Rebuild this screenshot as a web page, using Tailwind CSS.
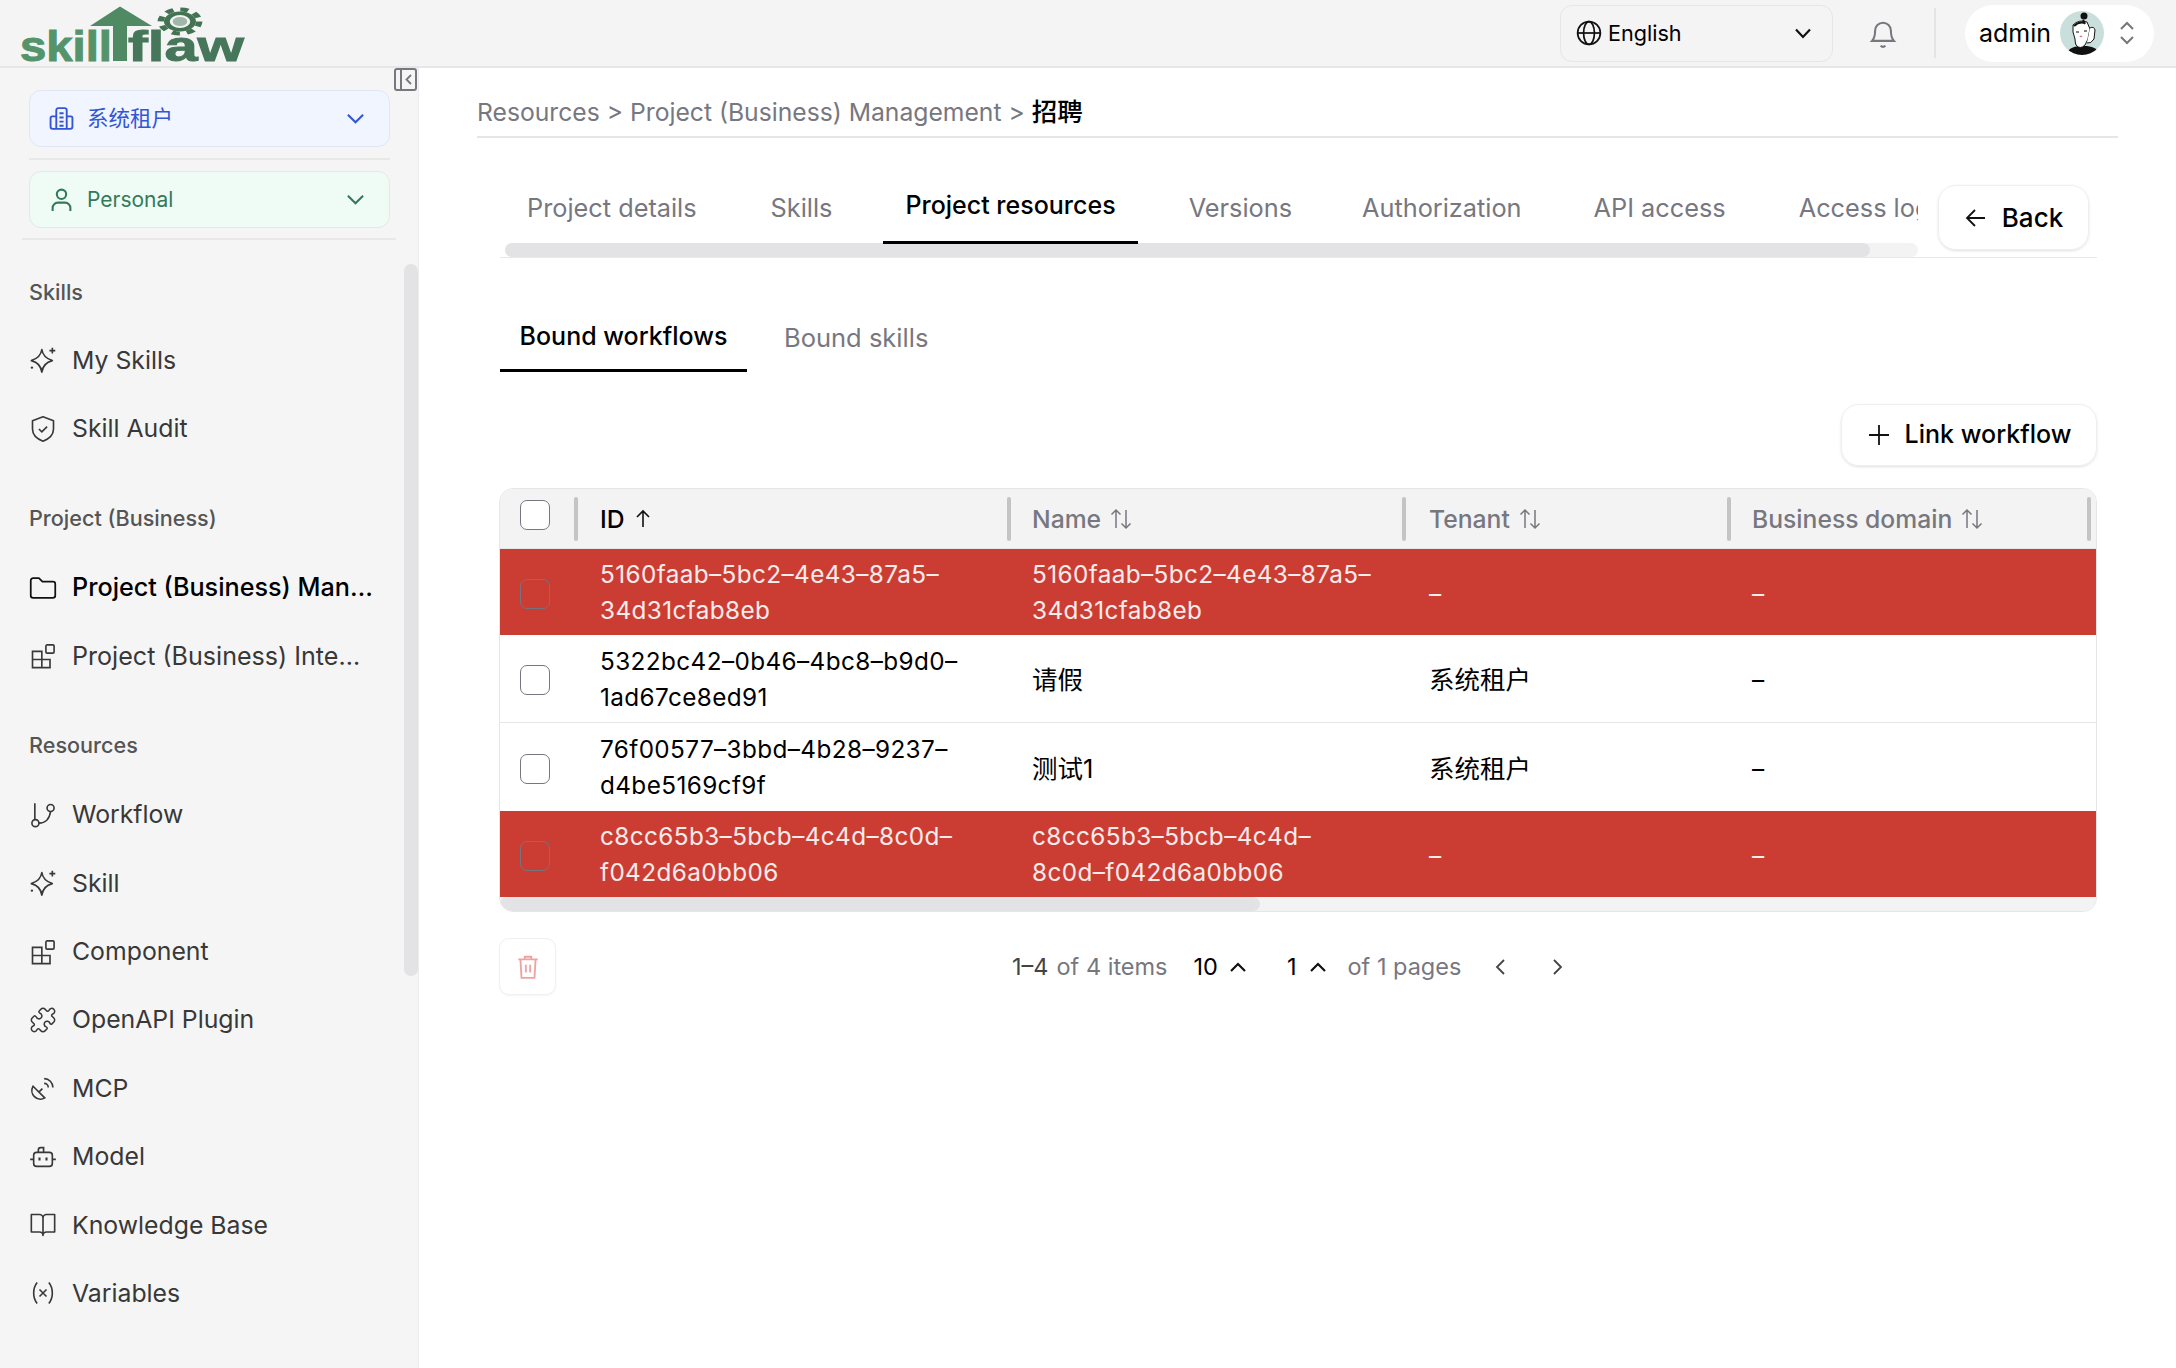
<!DOCTYPE html>
<html lang="en">
<head>
<meta charset="UTF-8">
<title>Project resources</title>
<script src="https://cdn.jsdelivr.net/npm/@tailwindcss/browser@4"></script>
</head>
<body class="w-[2176px] h-[1368px] overflow-hidden bg-white font-[Inter,'Noto_Sans_CJK_SC',sans-serif] text-black">

<!-- top bar -->
<header class="h-[68px] bg-[#f4f4f4] border-b-2 border-[#e6e6e6] flex items-center">
  <svg class="ml-[20px] mt-[1px]" width="226" height="62" viewBox="0 0 226 62">
    <path d="M70 23 100 3.500 132 23 107 23 107 58 93 58 93 23Z" fill="#4f8a63"/>
    <g transform="translate(160 18.500) scale(1.6 1)">
      <circle r="10" fill="#437353"/>
      <circle r="12" fill="none" stroke="#437353" stroke-width="4" stroke-dasharray="5 4.400"/>
      <circle r="5.500" fill="#9fb8a8" stroke="#f4f4f4" stroke-width="1.800"/>
    </g>
    <text x="0" y="57.500" textLength="92" lengthAdjust="spacingAndGlyphs" font-family="Liberation Sans" font-weight="700" font-size="43" fill="#55946b" stroke="#55946b" stroke-width="1">skill</text>
    <text x="108" y="57.500" textLength="116" lengthAdjust="spacingAndGlyphs" font-family="Liberation Sans" font-weight="700" font-size="43" fill="#47775a" stroke="#47775a" stroke-width="1">flaw</text>
  </svg>
  <div class="ml-auto flex items-center">
    <div class="w-[273px] h-[57px] border border-[#e6e6e6] rounded-[12px] flex items-center pl-[15px] pr-[19px] text-[21.600px]">
      <svg class="w-[26px] h-[26px]" viewBox="0 0 24 24" fill="none" stroke="#111" stroke-width="1.600"><circle cx="12" cy="12" r="10.500"/><ellipse cx="12" cy="12" rx="5" ry="10.500"/><path d="M1.500 12h21"/></svg>
      <span class="ml-[6px]">English</span>
      <svg class="ml-auto w-[20px] h-[20px]" viewBox="0 0 20 20" fill="none" stroke="#111" stroke-width="2.200"><path d="M3 6.500l7 7.500 7-7.500"/></svg>
    </div>
    <svg class="ml-[35px] w-[30px] h-[34px]" viewBox="0 0 24 28" fill="none" stroke="#77777f" stroke-width="1.700"><path d="M3 20.500h18c-2-2-2.500-3.500-2.500-8.500a6.500 6.500 0 0 0-13 0c0 5-.5 6.500-2.500 8.500Z"/><path d="M10 24.500q2 1.800 4 0"/></svg>
    <div class="ml-[36px] w-[2px] h-[50px] bg-[#e4e4e4]"></div>
    <div class="ml-[29px] mr-[22px] w-[189px] h-[57px] bg-white rounded-full flex items-center pl-[14px] text-[25px]">
      <span class="pt-[2px]">admin</span>
      <svg class="ml-[9px] w-[44px] h-[44px]" viewBox="0 0 44 44">
        <defs><clipPath id="av"><circle cx="22" cy="22" r="22"/></clipPath></defs>
        <g clip-path="url(#av)">
          <rect width="44" height="44" fill="#c9dfdb"/>
          <path d="M6 44q2-8 13-9h8q11 1 13 9Z" fill="#111"/>
          <path d="M13 14q6-6 14-3l3 7q-2 9-2 10l-3 6q-5 5-9 0-1-3-1-6-3-7-2-14Z" fill="#fff" stroke="#111" stroke-width="1"/>
          <path d="M30 17q4-2 5 2l-1 9q-3 5-7 4" fill="#fff" stroke="#111" stroke-width="1"/>
          <circle cx="24" cy="5" r="3.500" fill="#111"/>
          <path d="M23 9l2 4M14 15q5-5 11-3" stroke="#111" stroke-width="2" fill="none"/>
          <path d="M16 21h3M24 20h3" stroke="#111" stroke-width="1" fill="none"/>
          <path d="M20 25q1 1 2 0" stroke="#d77" stroke-width="1.500" fill="none"/>
        </g>
      </svg>
      <svg class="ml-[14px] w-[18px] h-[28px]" viewBox="0 0 18 28" fill="none" stroke="#777" stroke-width="2"><path d="M3 10l6-6 6 6M3 18l6 6 6-6"/></svg>
    </div>
  </div>
</header>

<div class="flex h-[1300px]">
  <!-- sidebar -->
  <aside class="relative w-[419px] shrink-0 bg-[#f5f5f5] border-r border-[#ececec] pt-[22px]">
    <button class="absolute left-[394px] top-0 w-[23px] h-[23px] border-2 border-[#77777f] rounded-[3px] flex">
      <span class="w-[6px] border-r-2 border-[#77777f]"></span>
      <svg class="ml-[3px] mt-[4px] w-[8px] h-[11px]" viewBox="0 0 8 11" fill="none" stroke="#77777f" stroke-width="1.800"><path d="M6 1 1.500 5.500 6 10"/></svg>
    </button>
    <div class="absolute left-[404px] top-[196px] w-[14px] h-[712px] rounded-full bg-[#e3e3e6]"></div>

    <div class="ml-[29px] mr-[28px] h-[57px] rounded-[12px] border border-[#e2e6f2] bg-[#f0f5ff] flex items-center pl-[19px] pr-[24px] text-[#3355d6] text-[21.500px]">
      <svg class="w-[25px] h-[25px]" viewBox="0 0 24 24" fill="none" stroke="#3355d6" stroke-width="1.800"><path d="M7 22V4a2 2 0 0 1 2-2h6a2 2 0 0 1 2 2v18M7 10H3a1.500 1.500 0 0 0-1.500 1.500V20a2 2 0 0 0 2 2h17a2 2 0 0 0 2-2v-8.500A1.500 1.500 0 0 0 21 10h-4M10 7h4M10 11h4M10 15h4M10 19h4"/></svg>
      <span class="ml-[13px]">系统租户</span>
      <svg class="ml-auto w-[19px] h-[19px]" viewBox="0 0 20 20" fill="none" stroke="#3355d6" stroke-width="2.200"><path d="M2 6l8 8 8-8"/></svg>
    </div>
    <div class="ml-[29px] mr-[28px] mt-[11px] h-[2px] bg-[#e8e8e8]"></div>
    <div class="ml-[29px] mr-[28px] mt-[11px] h-[57px] rounded-[12px] border border-[#e4e8e6] bg-[#eefcf5] flex items-center pl-[19px] pr-[24px] text-[#34795a] text-[21px]">
      <svg class="w-[25px] h-[25px]" viewBox="0 0 24 24" fill="none" stroke="#34795a" stroke-width="2"><circle cx="12" cy="7" r="4.500"/><path d="M3.500 23v-3a5 5 0 0 1 5-5h7a5 5 0 0 1 5 5v3"/></svg>
      <span class="ml-[13px]">Personal</span>
      <svg class="ml-auto w-[19px] h-[19px]" viewBox="0 0 20 20" fill="none" stroke="#34795a" stroke-width="2.200"><path d="M2 6l8 8 8-8"/></svg>
    </div>
    <div class="mx-[22px] mt-[10px] h-[2px] bg-[#e8e8e8]"></div>

    <div class="mt-[32px] ml-[29px] h-[40px] flex items-center text-[21.600px] font-medium text-[#555]">Skills</div>
    <nav class="mt-[14px] text-[#383838] text-[24.800px]">
      <a class="h-[68.400px] flex items-center pl-[29px]">
        <svg class="w-[28px] h-[28px] shrink-0" viewBox="0 0 24 24" fill="none" stroke="#383838" stroke-width="1.400" stroke-linejoin="round"><path d="M11 3q1 7 9 9.500-8 2-9 10-1-8-9-10 8-2.500 9-9.500Z"/><path d="M20 1.500v5M17.500 4h5"/><circle cx="2.500" cy="18.500" r="1" fill="#383838" stroke="none"/></svg>
        <span class="ml-[15px]">My Skills</span>
      </a>
      <a class="h-[68.400px] flex items-center pl-[29px]">
        <svg class="w-[28px] h-[28px] shrink-0" viewBox="0 0 24 24" fill="none" stroke="#383838" stroke-width="1.400"><path d="M12 1.500l9 3.500V12c0 5.500-4 8.500-9 10.500C7 20.500 3 17.500 3 12V5Z" stroke-linejoin="round"/><path d="M8.500 12l2.500 2.500 4.500-4.500"/></svg>
        <span class="ml-[15px]">Skill Audit</span>
      </a>
    </nav>

    <div class="mt-[35px] ml-[29px] h-[40px] flex items-center text-[21.600px] font-medium text-[#555]">Project (Business)</div>
    <nav class="mt-[16px] text-[#383838] text-[24.800px]">
      <a class="h-[68.400px] flex items-center pl-[29px] text-black font-medium text-[25.200px]">
        <svg class="w-[28px] h-[28px] shrink-0" viewBox="0 0 24 24" fill="none" stroke="#111" stroke-width="1.500"><path d="M1.500 5.500a2 2 0 0 1 2-2h5l3 3h9a2 2 0 0 1 2 2v10a2 2 0 0 1-2 2h-17a2 2 0 0 1-2-2Z" stroke-linejoin="round"/></svg>
        <span class="ml-[15px] w-[304px] truncate">Project (Business) Management</span>
      </a>
      <a class="h-[68.400px] flex items-center pl-[29px] text-[25.100px]">
        <svg class="w-[28px] h-[28px] shrink-0" viewBox="0 0 24 24" fill="none" stroke="#383838" stroke-width="1.400"><path d="M3 8h8v7h7v7H3ZM3 15h8v7"/><rect x="14.500" y="2.500" width="7" height="7" rx="1"/></svg>
        <span class="ml-[15px] w-[292px] truncate">Project (Business) Integration</span>
      </a>
    </nav>

    <div class="mt-[35px] ml-[29px] h-[40px] flex items-center text-[21.600px] font-medium text-[#555]">Resources</div>
    <nav class="mt-[15px] text-[#383838] text-[24.800px]">
      <a class="h-[68.400px] flex items-center pl-[29px]">
        <svg class="w-[28px] h-[28px] shrink-0" viewBox="0 0 24 24" fill="none" stroke="#383838" stroke-width="1.400"><circle cx="5.500" cy="19" r="3"/><circle cx="18.500" cy="6" r="3"/><path d="M5 16V2M8.500 19c6 0 9-3.500 10-10"/></svg>
        <span class="ml-[15px]">Workflow</span>
      </a>
      <a class="h-[68.400px] flex items-center pl-[29px]">
        <svg class="w-[28px] h-[28px] shrink-0" viewBox="0 0 24 24" fill="none" stroke="#383838" stroke-width="1.400" stroke-linejoin="round"><path d="M11 3q1 7 9 9.500-8 2-9 10-1-8-9-10 8-2.500 9-9.500Z"/><path d="M20 1.500v5M17.500 4h5"/><circle cx="2.500" cy="18.500" r="1" fill="#383838" stroke="none"/></svg>
        <span class="ml-[15px]">Skill</span>
      </a>
      <a class="h-[68.400px] flex items-center pl-[29px]">
        <svg class="w-[28px] h-[28px] shrink-0" viewBox="0 0 24 24" fill="none" stroke="#383838" stroke-width="1.400"><path d="M3 8h8v7h7v7H3ZM3 15h8v7"/><rect x="14.500" y="2.500" width="7" height="7" rx="1"/></svg>
        <span class="ml-[15px]">Component</span>
      </a>
      <a class="h-[68.400px] flex items-center pl-[29px]">
        <svg class="w-[28px] h-[28px] shrink-0" viewBox="0 0 24 24" fill="none" stroke="#383838" stroke-width="1.300" stroke-linejoin="round"><path d="M19.439 7.850c-.049.322.059.648.289.878l1.568 1.568c.47.47.706 1.087.706 1.704s-.235 1.233-.706 1.704l-1.611 1.611a.98.98 0 0 1-.837.276c-.47-.07-.802-.48-.968-.925a2.501 2.501 0 1 0-3.214 3.214c.446.166.855.497.925.968a.979.979 0 0 1-.276.837l-1.610 1.610a2.404 2.404 0 0 1-1.705.707 2.402 2.402 0 0 1-1.704-.706l-1.568-1.568a1.026 1.026 0 0 0-.877-.290c-.493.074-.84.504-1.020.968a2.500 2.500 0 1 1-3.237-3.237c.464-.18.894-.527.967-1.020a1.026 1.026 0 0 0-.289-.877l-1.568-1.568A2.402 2.402 0 0 1 1.998 12c0-.617.236-1.234.706-1.704L4.230 8.770c.24-.24.581-.353.917-.303.515.077.877.528 1.073 1.010a2.500 2.500 0 1 0 3.259-3.259c-.482-.196-.933-.558-1.010-1.073-.05-.336.062-.676.303-.917l1.525-1.525A2.402 2.402 0 0 1 12 1.998c.617 0 1.234.236 1.704.706l1.568 1.568c.23.23.556.338.877.290.493-.074.84-.504 1.020-.968a2.500 2.500 0 1 1 3.237 3.237c-.464.18-.894.527-.967 1.020Z"/></svg>
        <span class="ml-[15px]">OpenAPI Plugin</span>
      </a>
      <a class="h-[68.400px] flex items-center pl-[29px]">
        <svg class="w-[28px] h-[28px] shrink-0" viewBox="0 0 24 24" fill="none" stroke="#383838" stroke-width="1.400"><path d="M3.500 10.500a7.300 7.300 0 0 0 10 10ZM8 16l3.500-3.500M13 4a7.500 7.500 0 0 1 7.500 7.500M13 8a3.500 3.500 0 0 1 3.500 3.500"/></svg>
        <span class="ml-[15px]">MCP</span>
      </a>
      <a class="h-[68.400px] flex items-center pl-[29px]">
        <svg class="w-[28px] h-[28px] shrink-0" viewBox="0 0 24 24" fill="none" stroke="#383838" stroke-width="1.400"><rect x="4" y="8" width="16" height="12" rx="2.500"/><path d="M8 8V6a2 2 0 0 1 2-2h2.500v4M1 14h3M20 14h3"/><path d="M9 12.500v2.500M15 12.500v2.500" stroke-width="1.800"/></svg>
        <span class="ml-[15px]">Model</span>
      </a>
      <a class="h-[68.400px] flex items-center pl-[29px]">
        <svg class="w-[28px] h-[28px] shrink-0" viewBox="0 0 24 24" fill="none" stroke="#383838" stroke-width="1.400" stroke-linejoin="round"><path d="M12 6a3 3 0 0 0-3-3H2v15h7a3 3 0 0 1 3 3 3 3 0 0 1 3-3h7V3h-7a3 3 0 0 0-3 3v15"/></svg>
        <span class="ml-[15px]">Knowledge Base</span>
      </a>
      <a class="h-[68.400px] flex items-center pl-[29px]">
        <svg class="w-[28px] h-[28px] shrink-0" viewBox="0 0 24 24" fill="none" stroke="#383838" stroke-width="1.400"><path d="M7 3c-4 5-4 13 0 18M17 3c4 5 4 13 0 18M9 9l6 6M15 9l-6 6"/></svg>
        <span class="ml-[15px]">Variables</span>
      </a>
    </nav>
  </aside>

  <!-- main -->
  <main class="flex-1 px-[58px]">
    <div class="mt-[24px] h-[46px] border-b-2 border-[#e6e6e6] text-[24.700px] leading-[39px] text-[#77777f]">
      Resources &gt; Project (Business) Management &gt; <span class="text-black font-medium text-[25.500px]">招聘</span>
    </div>

    <div class="ml-[23px] mr-[21px]">
      <!-- project tabs -->
      <div class="mt-[32px] flex items-end border-b border-[#e8e8e8]">
        <div class="ml-[5px] w-[1413px] overflow-hidden">
          <div class="flex gap-[29px] h-[74px] pt-[1px] text-[25.300px] text-[#77777f] whitespace-nowrap">
            <span class="pl-[22px] pr-[23px] flex items-center">Project details</span>
            <span class="px-[22px] flex items-center">Skills</span>
            <span class="px-[22px] flex items-center pb-[1px] border-b-[3px] border-black text-black font-medium text-[25px]">Project resources</span>
            <span class="pl-[22px] pr-[19px] flex items-center">Versions</span>
            <span class="pl-[22px] pr-[21px] flex items-center">Authorization</span>
            <span class="px-[22px] flex items-center">API access</span>
            <span class="px-[22px] flex items-center">Access logs</span>
          </div>
          <div class="-mt-[1px] h-[14px] rounded-full bg-[#f3f3f3]">
            <div class="w-[1365px] h-full rounded-full bg-[#e3e3e6]"></div>
          </div>
        </div>
        <button class="ml-[20px] mb-[7px] w-[151px] h-[65px] rounded-[18px] border border-[#efefef] shadow-sm flex items-center justify-center gap-[14px] text-[26px] font-medium">
          <svg class="w-[24px] h-[24px]" viewBox="0 0 24 24" fill="none" stroke="#111" stroke-width="1.800"><path d="M21 12H3M11 4l-8 8 8 8"/></svg>
          Back
        </button>
      </div>

      <!-- sub tabs -->
      <div class="mt-[46px] flex h-[68px] text-[25px]">
        <span class="w-[247px] flex items-center justify-center border-b-[3px] border-black font-medium">Bound workflows</span>
        <span class="ml-[37px] flex items-center text-[#77777f] pt-[1px] text-[25.500px]">Bound skills</span>
      </div>

      <div class="mt-[32px] flex justify-end">
        <button class="w-[256px] h-[62px] rounded-[18px] border border-[#efefef] shadow-sm flex items-center justify-center gap-[14px] text-[25px] font-medium">
          <svg class="w-[24px] h-[24px]" viewBox="0 0 24 24" fill="none" stroke="#111" stroke-width="1.800"><path d="M12 2v20M2 12h20"/></svg>
          Link workflow
        </button>
      </div>

      <!-- table -->
      <div class="mt-[22px] -ml-[1px] w-[1598px] rounded-[14px] border border-[#e6e6e6] overflow-hidden text-[24.300px] leading-[36px]">
        <div class="grid grid-cols-[78px_433px_395px_325px_1fr] h-[60px] bg-[#f3f3f3] text-[#77777f] text-[24.700px] font-medium items-center border-b border-[#e6e6e6]">
          <div class="flex items-center justify-between pl-[20px]">
            <span class="w-[30px] h-[30px] -mt-[8px] rounded-[7px] border border-[#77777f] bg-white"></span>
            <span class="w-[4px] h-[44px] bg-[#c4c4c4] rounded-full"></span>
          </div>
          <div class="flex items-center justify-between pl-[22px] text-black">
            <span class="flex items-center gap-[8px]">ID
              <svg class="w-[20px] h-[20px]" viewBox="0 0 20 20" fill="none" stroke="#111" stroke-width="1.600"><path d="M10 18V2M4 8l6-6 6 6"/></svg>
            </span>
            <span class="w-[4px] h-[44px] bg-[#c4c4c4] rounded-full"></span>
          </div>
          <div class="flex items-center justify-between pl-[21px]">
            <span class="flex items-center gap-[8px]">Name
              <svg class="w-[24px] h-[24px]" viewBox="0 0 24 24" fill="none" stroke="#77777f" stroke-width="1.500"><path d="M7 21V3M2.500 7.500 7 3l4.500 4.500M17 3v18M12.500 16.500 17 21l4.500-4.500"/></svg>
            </span>
            <span class="w-[4px] h-[44px] bg-[#c4c4c4] rounded-full"></span>
          </div>
          <div class="flex items-center justify-between pl-[23px]">
            <span class="flex items-center gap-[8px]">Tenant
              <svg class="w-[24px] h-[24px]" viewBox="0 0 24 24" fill="none" stroke="#77777f" stroke-width="1.500"><path d="M7 21V3M2.500 7.500 7 3l4.500 4.500M17 3v18M12.500 16.500 17 21l4.500-4.500"/></svg>
            </span>
            <span class="w-[4px] h-[44px] bg-[#c4c4c4] rounded-full"></span>
          </div>
          <div class="flex items-center justify-between pl-[21px] pr-[5px]">
            <span class="flex items-center gap-[8px]">Business domain
              <svg class="w-[24px] h-[24px]" viewBox="0 0 24 24" fill="none" stroke="#77777f" stroke-width="1.500"><path d="M7 21V3M2.500 7.500 7 3l4.500 4.500M17 3v18M12.500 16.500 17 21l4.500-4.500"/></svg>
            </span>
            <span class="w-[4px] h-[44px] bg-[#c4c4c4] rounded-full"></span>
          </div>
        </div>

        <div class="grid grid-cols-[78px_433px_395px_325px_1fr] h-[86px] pt-[3px] items-center bg-[#cb3d33] text-white/90">
          <div class="pl-[20px]"><span class="block w-[30px] h-[30px] rounded-[7px] border border-[#76737e]"></span></div>
          <div class="pl-[22px] pr-[30px] -mt-[3px] tracking-[0.4px]">5160faab–5bc2–4e43–87a5–34d31cfab8eb</div>
          <div class="pl-[21px] pr-[30px] -mt-[3px] tracking-[0.4px]">5160faab–5bc2–4e43–87a5–34d31cfab8eb</div>
          <div class="pl-[23px]">–</div>
          <div class="pl-[21px]">–</div>
        </div>
        <div class="grid grid-cols-[78px_433px_395px_325px_1fr] h-[88px] pt-[3px] items-center border-b border-[#e6e6e6]">
          <div class="pl-[20px]"><span class="block w-[30px] h-[30px] rounded-[7px] border border-[#77777f]"></span></div>
          <div class="pl-[22px] pr-[30px] -mt-[3px] tracking-[0.4px]">5322bc42–0b46–4bc8–b9d0–1ad67ce8ed91</div>
          <div class="pl-[21px] text-[25.500px]">请假</div>
          <div class="pl-[23px] text-[25.500px]">系统租户</div>
          <div class="pl-[21px]">–</div>
        </div>
        <div class="grid grid-cols-[78px_433px_395px_325px_1fr] h-[88px] pt-[3px] items-center">
          <div class="pl-[20px]"><span class="block w-[30px] h-[30px] rounded-[7px] border border-[#77777f]"></span></div>
          <div class="pl-[22px] pr-[30px] -mt-[3px] tracking-[0.4px]">76f00577–3bbd–4b28–9237–d4be5169cf9f</div>
          <div class="pl-[21px] text-[25.500px]">测试1</div>
          <div class="pl-[23px] text-[25.500px]">系统租户</div>
          <div class="pl-[21px]">–</div>
        </div>
        <div class="grid grid-cols-[78px_433px_395px_325px_1fr] h-[86px] pt-[3px] items-center bg-[#cb3d33] text-white/90">
          <div class="pl-[20px]"><span class="block w-[30px] h-[30px] rounded-[7px] border border-[#76737e]"></span></div>
          <div class="pl-[22px] pr-[30px] -mt-[3px] tracking-[0.4px]">c8cc65b3–5bcb–4c4d–8c0d–f042d6a0bb06</div>
          <div class="pl-[21px] pr-[30px] -mt-[3px] tracking-[0.4px]">c8cc65b3–5bcb–4c4d–8c0d–f042d6a0bb06</div>
          <div class="pl-[23px]">–</div>
          <div class="pl-[21px]">–</div>
        </div>
        <div class="h-[14px] bg-[#f3f3f3]">
          <div class="w-[760px] h-full rounded-full bg-[#e3e3e6]"></div>
        </div>
      </div>

      <!-- pagination -->
      <div class="mt-[26px] -ml-[1px] flex items-center text-[23.500px] text-[#77777f]">
        <button class="w-[57px] h-[57px] rounded-[10px] border border-[#f0f0f0] shadow-xs flex items-center justify-center">
          <svg class="w-[26px] h-[26px]" viewBox="0 0 24 24" fill="none" stroke="#efa3a0" stroke-width="1.700"><path d="M3 5h18M9 5V2.500h6V5M5 5l1 17h12l1-17M10 10v7M14 10v7"/></svg>
        </button>
        <span class="ml-[456px] text-[#444]">1–4</span><span class="ml-[8px]">of 4 items</span>
        <span class="ml-[26px] text-black">10</span>
        <svg class="ml-[11px] w-[18px] h-[18px]" viewBox="0 0 18 18" fill="none" stroke="#111" stroke-width="2.200"><path d="M2 13l7-7 7 7"/></svg>
        <span class="ml-[40px] text-black">1</span>
        <svg class="ml-[13px] w-[18px] h-[18px]" viewBox="0 0 18 18" fill="none" stroke="#111" stroke-width="2.200"><path d="M2 13l7-7 7 7"/></svg>
        <span class="ml-[20px]">of 1 pages</span>
        <svg class="ml-[33px] w-[14px] h-[18px]" viewBox="0 0 14 18" fill="none" stroke="#444" stroke-width="1.800"><path d="M10 2 3 9l7 7"/></svg>
        <svg class="ml-[42px] w-[14px] h-[18px]" viewBox="0 0 14 18" fill="none" stroke="#444" stroke-width="1.800"><path d="M4 2l7 7-7 7"/></svg>
      </div>
    </div>
  </main>
</div>
</body>
</html>
